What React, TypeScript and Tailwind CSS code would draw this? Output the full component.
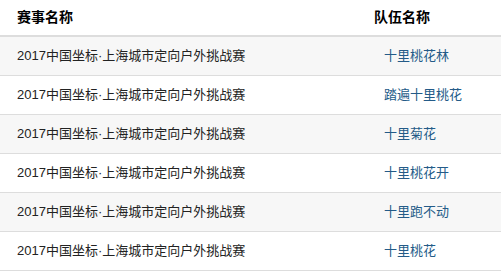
const rows = [
  { race: '2017中国坐标·上海城市定向户外挑战赛', team: '十里桃花林' },
  { race: '2017中国坐标·上海城市定向户外挑战赛', team: '踏遍十里桃花' },
  { race: '2017中国坐标·上海城市定向户外挑战赛', team: '十里菊花' },
  { race: '2017中国坐标·上海城市定向户外挑战赛', team: '十里桃花开' },
  { race: '2017中国坐标·上海城市定向户外挑战赛', team: '十里跑不动' },
  { race: '2017中国坐标·上海城市定向户外挑战赛', team: '十里桃花' },
]

export default function App() {
  return (
    <div
      className="h-[276px] w-[501px] overflow-hidden bg-white text-[13px] text-[#333]"
      style={{ fontFamily: '"Liberation Sans", "Noto Sans CJK SC", sans-serif' }}
    >
      <table className="w-full border-collapse">
        <thead>
          <tr className="h-[36px] border-b-2 border-[#ddd] text-left">
            <th className="w-[374px] pl-[17px] text-[14px] font-bold text-black">赛事名称</th>
            <th className="text-[14px] font-bold text-black">队伍名称</th>
          </tr>
        </thead>
        <tbody>
          {rows.map((row, i) => (
            <tr key={i} className={`h-[39px] border-b border-[#ddd] ${i % 2 === 0 ? 'bg-[#f7f7f7]' : 'bg-white'}`}>
              <td className="pl-[17px] text-[#222]">{row.race}</td>
              <td className="pl-[10px]">
                <a className="text-[#245b88]">{row.team}</a>
              </td>
            </tr>
          ))}
        </tbody>
      </table>
    </div>
  )
}
